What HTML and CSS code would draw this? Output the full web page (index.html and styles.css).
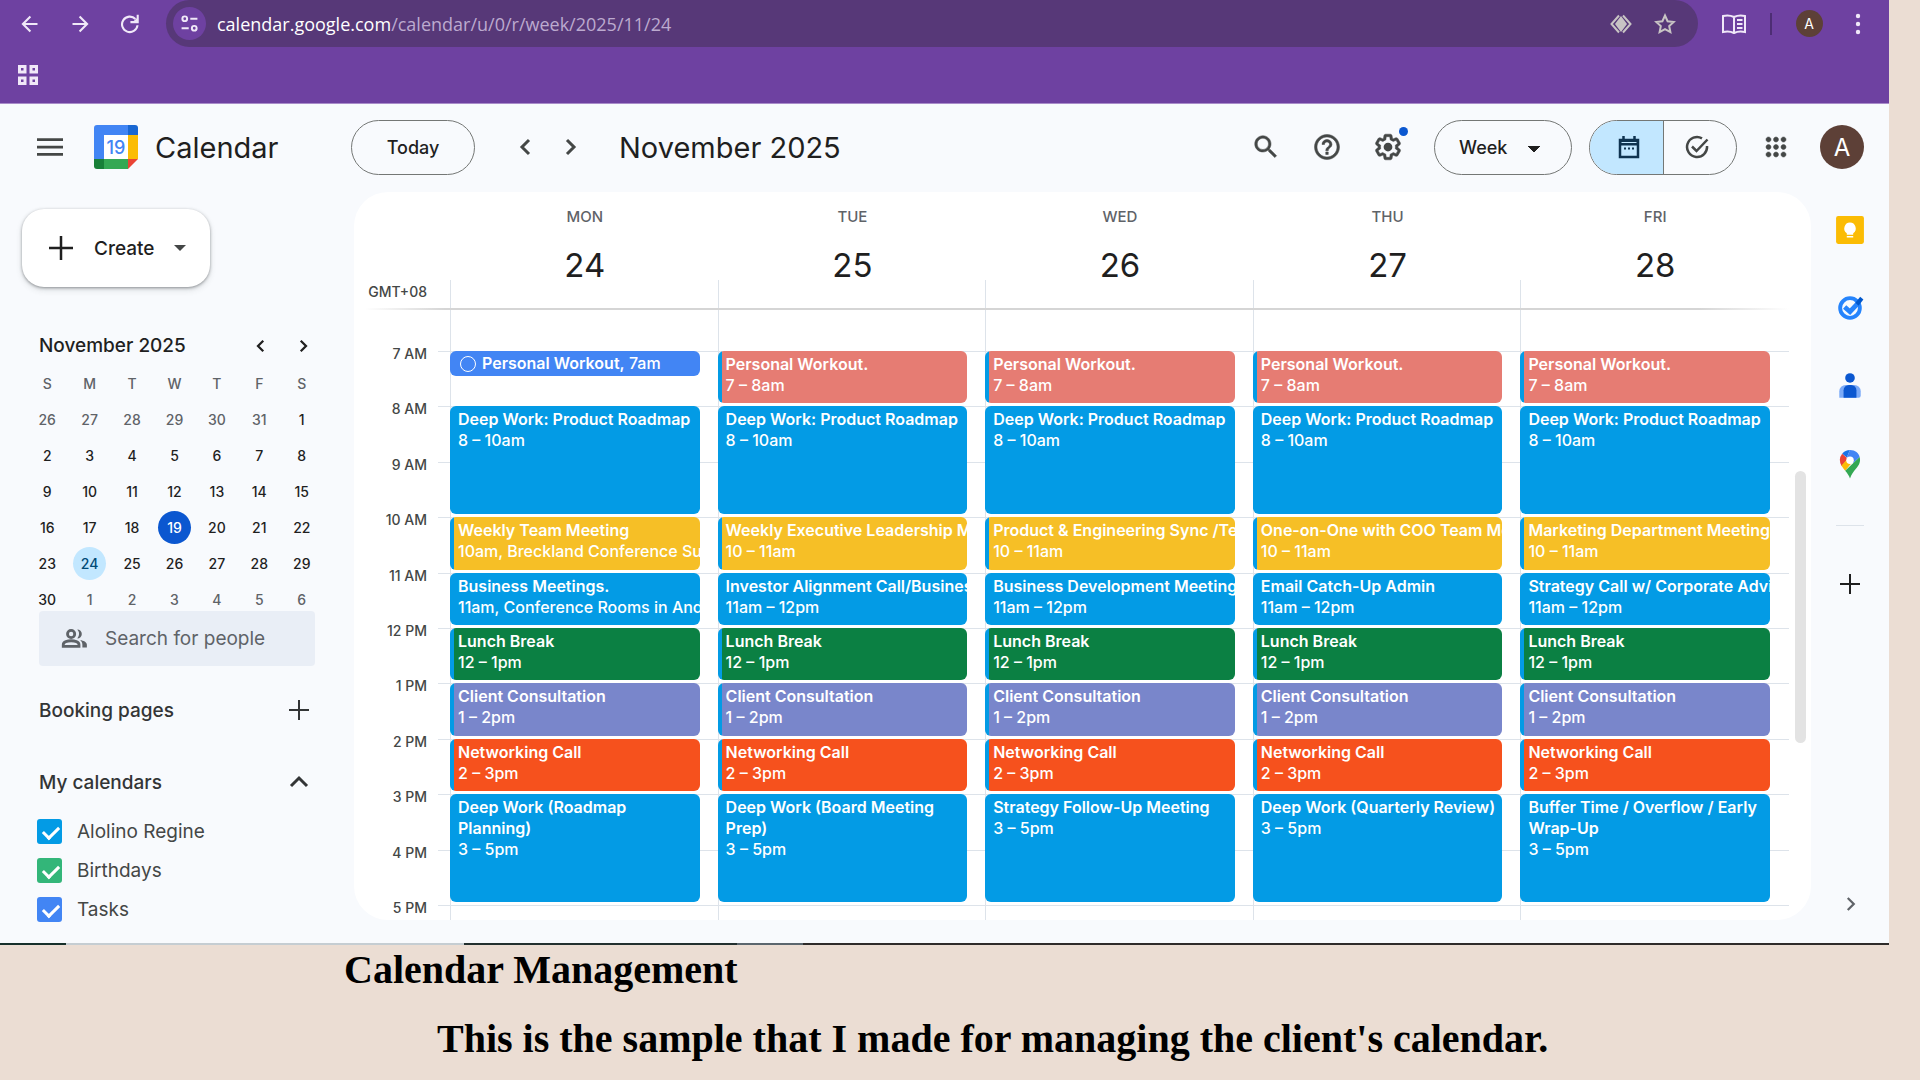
FILE: index.html
```html
<!DOCTYPE html>
<html lang="en">
<head>
    <meta charset="UTF-8">
    <meta name="viewport" content="width=device-width, initial-scale=1.0">
    <title>Calendar Management</title>
    <link rel="stylesheet" href="styles.css">
</head>
<body>
    <div class="window">
        <div class="browser">
            <div class="toolbar">
                <div class="nav-buttons">
                    <button class="icon-button" aria-label="Back"><svg class="icon" viewBox="0 0 24 24"><path class="line bold" d="M21 12H4M12.500 3L3.500 12l9 9"/></svg></button>
                    <button class="icon-button" aria-label="Forward"><svg class="icon" viewBox="0 0 24 24"><path class="line bold" d="M3 12h17M11.500 3l9 9-9 9"/></svg></button>
                    <button class="icon-button" aria-label="Reload"><svg class="icon" viewBox="0 0 24 24"><path class="line bold" d="M18.500 6A9.300 9.300 0 1 0 21 13.500"/><path d="M22.500 1v10h-10V8.500h4L20 5V1z" fill="currentColor"/></svg></button>
                </div>
                <div class="address">
                    <span class="site-info"><svg class="icon" viewBox="0 0 24 24"><g class="line bold"><circle cx="6" cy="6" r="3"/><path d="M13 6h9M2 18h9"/><circle cx="18" cy="18" r="3"/></g></svg></span>
                    <span class="url">calendar.google.com<span class="path">/calendar/u/0/r/week/2025/11/24</span></span>
                    <span class="address-icons">
                        <svg class="icon" viewBox="0 0 24 24"><path class="line" d="M10 3.500L2.500 12l7.500 8.500M14 3.500l7.500 8.500-7.500 8.500"/><path d="M12 4l6 8-6 8-6-8z" fill="currentColor"/></svg>
                        <svg class="icon" viewBox="0 0 24 24"><path class="line" d="M12 3.500l2.600 5.700 6.100.700-4.500 4.200 1.200 6.100-5.400-3-5.400 3 1.200-6.100-4.500-4.200 6.100-.7z"/></svg>
                    </span>
                </div>
                <div class="browser-menu">
                    <svg class="icon reader" viewBox="0 0 26 24"><path class="line" d="M13 5C10 3.500 6 3 2 4v16c4-1 8-.5 11 1 3-1.500 7-2 11-1V4C20 3 16 3.500 13 5zM13 5v16M16 8h5.500M16 12h5.500M16 16h5.500"/></svg>
                    <span class="bar"></span>
                    <span class="avatar small">A</span>
                    <button class="icon-button" aria-label="Browser menu"><svg class="icon" viewBox="0 0 24 24" fill="currentColor"><circle cx="12" cy="4" r="2.200"/><circle cx="12" cy="12" r="2.200"/><circle cx="12" cy="20" r="2.200"/></svg></button>
                </div>
            </div>
            <div class="bookmarks">
                <button class="icon-button" aria-label="Apps"><svg class="icon" viewBox="0 0 24 24"><path class="line thick" d="M3.500 3.500h5.500v5.500H3.500zM15 3.500h5.500v5.500H15zM3.500 15h5.500v5.500H3.500zM15 15h5.500v5.500H15z"/></svg></button>
            </div>
        </div>

        <div class="app">
            <header class="header">
                <div class="brand">
                    <button class="icon-button" aria-label="Main menu"><svg class="icon menu" viewBox="0 0 24 24"><path d="M0 20h24v-2.500H0zM0 13.300h24v-2.500H0zM0 4v2.500h24V4z" fill="currentColor"/></svg></button>
                    <svg class="logo" viewBox="0 0 44 44">
                        <path d="M3 0h31v10H10v24H0V3a3 3 0 0 1 3-3z" fill="#4285f4"/>
                        <path d="M34 0h7a3 3 0 0 1 3 3v7H34z" fill="#1967d2"/>
                        <path d="M34 10h10v24H34z" fill="#fbbc04"/>
                        <path d="M10 34h24v10H10z" fill="#34a853"/>
                        <path d="M0 34h10v10H3a3 3 0 0 1-3-3z" fill="#188038"/>
                        <path d="M34 34h10L34 44z" fill="#ea4335"/>
                        <path d="M10 10h24v24H10z" fill="#fff"/>
                        <text x="22" y="29" class="logo-day">19</text>
                    </svg>
                    <span class="brand-name">Calendar</span>
                </div>
                <div class="period">
                    <button class="pill today">Today</button>
                    <button class="icon-button" aria-label="Previous week"><svg class="icon" viewBox="0 0 24 24"><path class="line thick" d="M15 5l-7 7 7 7"/></svg></button>
                    <button class="icon-button" aria-label="Next week"><svg class="icon" viewBox="0 0 24 24"><path class="line thick" d="M9 5l7 7-7 7"/></svg></button>
                    <h1 class="period-name">November 2025</h1>
                </div>
                <div class="tools">
                    <button class="icon-button" aria-label="Search"><svg class="icon large heavy" viewBox="0 0 24 24"><path fill="currentColor" d="M15.500 14h-.79l-.28-.27C15.410 12.590 16 11.110 16 9.500 16 5.910 13.090 3 9.500 3S3 5.910 3 9.500 5.910 16 9.500 16c1.610 0 3.090-.59 4.230-1.570l.27.28v.79l5 4.990L20.490 19l-4.990-5zm-6 0C7.010 14 5 11.990 5 9.500S7.010 5 9.500 5 14 7.010 14 9.500 11.990 14 9.500 14z"/></svg></button>
                    <button class="icon-button" aria-label="Help"><svg class="icon large heavy" viewBox="0 0 24 24"><path fill="currentColor" d="M11 18h2v-2h-2v2zm1-16C6.480 2 2 6.480 2 12s4.480 10 10 10 10-4.480 10-10S17.520 2 12 2zm0 18c-4.410 0-8-3.590-8-8s3.590-8 8-8 8 3.590 8 8-3.590 8-8 8zm0-14c-2.210 0-4 1.790-4 4h2c0-1.100.9-2 2-2s2 .9 2 2c0 2-3 1.750-3 5h2c0-2.250 3-2.500 3-5 0-2.210-1.790-4-4-4z"/></svg></button>
                    <button class="icon-button settings" aria-label="Settings"><svg class="icon large heavy" viewBox="0 0 24 24" fill="currentColor"><path d="M13.850 22.250h-3.700c-.74 0-1.360-.54-1.450-1.270l-.27-1.890c-.27-.14-.53-.29-.79-.46l-1.800.72c-.7.26-1.470-.03-1.810-.65L2.200 15.530c-.35-.66-.2-1.440.36-1.880l1.530-1.190c-.01-.15-.02-.3-.02-.46 0-.15.01-.31.02-.46l-1.520-1.190c-.59-.45-.74-1.260-.37-1.880l1.850-3.190c.34-.62 1.110-.9 1.790-.63l1.810.73c.26-.17.52-.32.78-.46l.27-1.910c.09-.7.71-1.250 1.440-1.250h3.700c.74 0 1.360.54 1.450 1.270l.27 1.890c.27.14.53.29.79.46l1.800-.72c.71-.26 1.480.03 1.820.65l1.840 3.180c.36.66.2 1.440-.36 1.880l-1.520 1.190c.01.15.02.3.02.46s-.01.31-.02.46l1.520 1.190c.56.45.72 1.230.37 1.860l-1.860 3.220c-.34.62-1.110.9-1.800.63l-1.800-.72c-.26.17-.52.32-.78.46l-.27 1.910c-.1.68-.72 1.220-1.460 1.220zm-3.230-2h2.760l.37-2.550.53-.22c.44-.18.88-.44 1.340-.78l.45-.34 2.380.96 1.380-2.400-2.030-1.580.07-.56c.03-.26.06-.51.06-.78s-.03-.53-.06-.78l-.07-.56 2.030-1.580-1.390-2.400-2.390.96-.45-.35c-.42-.32-.87-.58-1.330-.77l-.52-.22-.37-2.550h-2.760l-.37 2.550-.53.21c-.44.19-.88.44-1.340.79l-.45.33-2.380-.95-1.390 2.390 2.030 1.580-.07.56a7 7 0 0 0-.06.79c0 .26.02.53.06.78l.07.56-2.030 1.580 1.380 2.400 2.390-.96.45.35c.43.33.86.58 1.330.77l.53.22z"/><circle cx="12" cy="12" r="3.500"/></svg><span class="dot"></span></button>
                    <select class="pill view" aria-label="View">
                        <option>Week</option>
                    </select>
                    <div class="toggle">
                        <button class="toggle-button active" aria-label="Calendar"><svg class="icon" viewBox="0 0 24 24"><path class="line bold" d="M3 5h18v17H3zM6.500 1v4M17.500 1v4"/><path d="M2 4h20v6.500H2z" fill="currentColor"/><path d="M4.500 7.500h15" stroke="#c2e7ff"/><path d="M7 12.500h2v2H7zM11 12.500h2v2h-2zM15 12.500h2v2h-2z" fill="currentColor"/></svg></button>
                        <button class="toggle-button" aria-label="Tasks"><svg class="icon" viewBox="0 0 24 24"><path class="line bold" d="M17 3.300A10 10 0 1 0 22 11M7 11.500l4.500 4.500L22.500 4.500"/></svg></button>
                    </div>
                    <button class="icon-button apps" aria-label="Google apps"><svg class="icon large heavy" viewBox="0 0 24 24"><path fill="currentColor" d="M6 8c1.100 0 2-.9 2-2s-.9-2-2-2-2 .9-2 2 .9 2 2 2zm6 12c1.100 0 2-.9 2-2s-.9-2-2-2-2 .9-2 2 .9 2 2 2zm-6 0c1.100 0 2-.9 2-2s-.9-2-2-2-2 .9-2 2 .9 2 2 2zm0-6c1.100 0 2-.9 2-2s-.9-2-2-2-2 .9-2 2 .9 2 2 2zm6 0c1.100 0 2-.9 2-2s-.9-2-2-2-2 .9-2 2 .9 2 2 2zm4-8c0 1.100.9 2 2 2s2-.9 2-2-.9-2-2-2-2 .9-2 2zm-4 2c1.100 0 2-.9 2-2s-.9-2-2-2-2 .9-2 2 .9 2 2 2zm6 6c1.100 0 2-.9 2-2s-.9-2-2-2-2 .9-2 2 .9 2 2 2zm0 6c1.100 0 2-.9 2-2s-.9-2-2-2-2 .9-2 2 .9 2 2 2z"/></svg></button>
                    <span class="avatar">A</span>
                </div>
            </header>

            <div class="main">
                <aside class="sidebar">
                    <button class="create">
                        <svg class="icon" viewBox="0 0 24 24"><path class="line bold" d="M12 0v24M0 12h24"/></svg>
                        <span>Create</span>
                        <span class="caret"></span>
                    </button>

                    <div class="mini-head">
                        <span class="mini-title">November 2025</span>
                        <button class="icon-button" aria-label="Previous month"><svg class="icon small-icon" viewBox="0 0 24 24"><path class="line thick" d="M15 5l-7 7 7 7"/></svg></button>
                        <button class="icon-button" aria-label="Next month"><svg class="icon small-icon" viewBox="0 0 24 24"><path class="line thick" d="M9 5l7 7-7 7"/></svg></button>
                    </div>
                    <table class="mini">
                        <thead>
                            <tr><th>S</th><th>M</th><th>T</th><th>W</th><th>T</th><th>F</th><th>S</th></tr>
                        </thead>
                        <tbody>
                            <tr><td class="other">26</td><td class="other">27</td><td class="other">28</td><td class="other">29</td><td class="other">30</td><td class="other">31</td><td>1</td></tr>
                            <tr><td>2</td><td>3</td><td>4</td><td>5</td><td>6</td><td>7</td><td>8</td></tr>
                            <tr><td>9</td><td>10</td><td>11</td><td>12</td><td>13</td><td>14</td><td>15</td></tr>
                            <tr><td>16</td><td>17</td><td>18</td><td><span class="now">19</span></td><td>20</td><td>21</td><td>22</td></tr>
                            <tr><td>23</td><td><span class="picked">24</span></td><td>25</td><td>26</td><td>27</td><td>28</td><td>29</td></tr>
                            <tr><td>30</td><td class="other">1</td><td class="other">2</td><td class="other">3</td><td class="other">4</td><td class="other">5</td><td class="other">6</td></tr>
                        </tbody>
                    </table>

                    <label class="people">
                        <svg class="icon people-icon" viewBox="0 0 24 24"><g class="line bold"><circle cx="9" cy="8" r="3.200"/><path d="M2 19v-1.500c0-2.500 4-3.500 7-3.500s7 1 7 3.500V19z"/></g><path fill="currentColor" d="M14.500 12a4 4 0 0 0 0-8 6 6 0 0 1 0 8zM17 13.300c3 .6 6 1.800 6 4.200V20h-4v-2.500c0-1.800-.8-3.100-2-4.200z"/></svg>
                        <input type="text" placeholder="Search for people" aria-label="Search for people">
                    </label>

                    <div class="section">
                        <h2>Booking pages</h2>
                        <button class="icon-button" aria-label="Add booking page"><svg class="icon" viewBox="0 0 24 24"><path class="line" d="M12 2v20M2 12h20"/></svg></button>
                    </div>
                    <div class="section">
                        <h2>My calendars</h2>
                        <button class="icon-button" aria-label="Collapse"><svg class="icon" viewBox="0 0 24 24"><path class="line thick" d="M4 16l8-8 8 8"/></svg></button>
                    </div>
                    <div class="calendars">
                        <label><input type="checkbox" class="check blue" checked>Alolino Regine</label>
                        <label><input type="checkbox" class="check green" checked>Birthdays</label>
                        <label><input type="checkbox" class="check indigo" checked>Tasks</label>
                    </div>
                </aside>

                <section class="week">
                    <div class="days">
                        <div></div>
                        <div class="day-head"><span>MON</span><strong>24</strong></div>
                        <div class="day-head"><span>TUE</span><strong>25</strong></div>
                        <div class="day-head"><span>WED</span><strong>26</strong></div>
                        <div class="day-head"><span>THU</span><strong>27</strong></div>
                        <div class="day-head"><span>FRI</span><strong>28</strong></div>
                    </div>
                    <div class="all-day">
                        <div class="zone">GMT+08</div>
                        <div class="cell"></div><div class="cell"></div><div class="cell"></div><div class="cell"></div><div class="cell"></div>
                    </div>
                    <div class="rule"></div>
                    <div class="times">
                        <div class="lines"><i></i><i></i><i></i><i></i><i></i><i></i><i></i><i></i><i></i><i></i><i></i><i></i></div>
                        <div class="hours"><span></span><span>7 AM</span><span>8 AM</span><span>9 AM</span><span>10 AM</span><span>11 AM</span><span>12 PM</span><span>1 PM</span><span>2 PM</span><span>3 PM</span><span>4 PM</span><span>5 PM</span></div>
                        <div class="day">
                            <div class="event at7 task"><span class="ring"></span><p><b>Personal Workout,</b> 7am</p></div>
                            <div class="event at8 long"><b>Deep Work: Product Roadmap</b><p>8 – 10am</p></div>
                            <div class="event at10 yellow"><b>Weekly Team Meeting</b><p>10am, Breckland Conference Suite</p></div>
                            <div class="event at11"><b>Business Meetings.</b><p>11am, Conference Rooms in Andover</p></div>
                            <div class="event at12 green"><b>Lunch Break</b><p>12 – 1pm</p></div>
                            <div class="event at13 purple"><b>Client Consultation</b><p>1 – 2pm</p></div>
                            <div class="event at14 orange"><b>Networking Call</b><p>2 – 3pm</p></div>
                            <div class="event at15 long"><b>Deep Work (Roadmap Planning)</b><p>3 – 5pm</p></div>
                        </div>
                        <div class="day">
                            <div class="event at7 pink"><b>Personal Workout.</b><p>7 – 8am</p></div>
                            <div class="event at8 long"><b>Deep Work: Product Roadmap</b><p>8 – 10am</p></div>
                            <div class="event at10 yellow"><b>Weekly Executive Leadership Meeting</b><p>10 – 11am</p></div>
                            <div class="event at11"><b>Investor Alignment Call/Business</b><p>11am – 12pm</p></div>
                            <div class="event at12 green"><b>Lunch Break</b><p>12 – 1pm</p></div>
                            <div class="event at13 purple"><b>Client Consultation</b><p>1 – 2pm</p></div>
                            <div class="event at14 orange"><b>Networking Call</b><p>2 – 3pm</p></div>
                            <div class="event at15 long"><b>Deep Work (Board Meeting Prep)</b><p>3 – 5pm</p></div>
                        </div>
                        <div class="day">
                            <div class="event at7 pink"><b>Personal Workout.</b><p>7 – 8am</p></div>
                            <div class="event at8 long"><b>Deep Work: Product Roadmap</b><p>8 – 10am</p></div>
                            <div class="event at10 yellow"><b>Product &amp; Engineering Sync /Team</b><p>10 – 11am</p></div>
                            <div class="event at11"><b>Business Development Meeting</b><p>11am – 12pm</p></div>
                            <div class="event at12 green"><b>Lunch Break</b><p>12 – 1pm</p></div>
                            <div class="event at13 purple"><b>Client Consultation</b><p>1 – 2pm</p></div>
                            <div class="event at14 orange"><b>Networking Call</b><p>2 – 3pm</p></div>
                            <div class="event at15 long"><b>Strategy Follow-Up Meeting</b><p>3 – 5pm</p></div>
                        </div>
                        <div class="day">
                            <div class="event at7 pink"><b>Personal Workout.</b><p>7 – 8am</p></div>
                            <div class="event at8 long"><b>Deep Work: Product Roadmap</b><p>8 – 10am</p></div>
                            <div class="event at10 yellow"><b>One-on-One with COO Team Meeting</b><p>10 – 11am</p></div>
                            <div class="event at11"><b>Email Catch-Up Admin</b><p>11am – 12pm</p></div>
                            <div class="event at12 green"><b>Lunch Break</b><p>12 – 1pm</p></div>
                            <div class="event at13 purple"><b>Client Consultation</b><p>1 – 2pm</p></div>
                            <div class="event at14 orange"><b>Networking Call</b><p>2 – 3pm</p></div>
                            <div class="event at15 long"><b>Deep Work (Quarterly Review)</b><p>3 – 5pm</p></div>
                        </div>
                        <div class="day">
                            <div class="event at7 pink"><b>Personal Workout.</b><p>7 – 8am</p></div>
                            <div class="event at8 long"><b>Deep Work: Product Roadmap</b><p>8 – 10am</p></div>
                            <div class="event at10 yellow"><b>Marketing Department Meeting</b><p>10 – 11am</p></div>
                            <div class="event at11"><b>Strategy Call w/ Corporate Advisors</b><p>11am – 12pm</p></div>
                            <div class="event at12 green"><b>Lunch Break</b><p>12 – 1pm</p></div>
                            <div class="event at13 purple"><b>Client Consultation</b><p>1 – 2pm</p></div>
                            <div class="event at14 orange"><b>Networking Call</b><p>2 – 3pm</p></div>
                            <div class="event at15 long"><b>Buffer Time / Overflow / Early Wrap-Up</b><p>3 – 5pm</p></div>
                        </div>
                        <div class="scroll-thumb"></div>
                    </div>
                </section>

                <nav class="side-panel">
                    <button class="icon-button" aria-label="Keep"><svg class="icon large" viewBox="0 0 28 28"><rect x="1" y="1" width="26" height="26" rx="2" fill="#fbbc04"/><path d="M14 7a5.500 5.500 0 0 0-3 10v1.500h6V17a5.500 5.500 0 0 0-3-10zM11 19.500h6V21h-6z" fill="#fff"/></svg></button>
                    <button class="icon-button" aria-label="Tasks"><svg class="icon large" viewBox="0 0 28 28"><circle cx="14" cy="14" r="9.200" fill="none" stroke="#2684fc" stroke-width="3.600"/><path d="M9 13l5 4.500L22 9" fill="none" stroke="#2684fc" stroke-width="4.500"/><path d="M19 9l4.500-5.500 3 2.500-4.500 6z" fill="#0057cc"/></svg></button>
                    <button class="icon-button" aria-label="Contacts"><svg class="icon large" viewBox="0 0 28 28"><path d="M4 25v-6a6 6 0 0 1 6-6h8a6 6 0 0 1 6 6v4a2 2 0 0 1-2 2z" fill="#7baaf7"/><path d="M8 25v-7a5 5 0 0 1 5-5h2a5 5 0 0 1 5 5v7z" fill="#0b57d0"/><circle cx="14" cy="6.500" r="4.500" fill="#0b57d0"/></svg></button>
                    <button class="icon-button" aria-label="Maps"><svg class="icon large" viewBox="0 0 28 28"><path d="M14 1a9.500 9.500 0 0 0-7.300 3.400L11 8z" fill="#1a73e8"/><path d="M6.700 4.400A9.500 9.500 0 0 0 6.300 16L12 9z" fill="#ea4335"/><path d="M14 1c5 0 8 3 9 6.500L17 13l-6-5z" fill="#4285f4"/><path d="M6 15.500c1 1.800 2.300 3.200 3.500 4.700L18 10l-7 0z" fill="#fbbc04"/><path d="M23 7.500c1.200 4.500-.500 7.500-3.500 11-2.500 3-4 5-5.500 9-1-3-2.500-5-4.500-7.300z" fill="#34a853"/><circle cx="14" cy="10.500" r="3.500" fill="#fff"/></svg></button>
                    <hr>
                    <button class="icon-button add" aria-label="Get add-ons"><svg class="icon" viewBox="0 0 24 24"><path class="line" d="M12 2v20M2 12h20"/></svg></button>
                    <button class="icon-button collapse" aria-label="Hide side panel"><svg class="icon small-icon" viewBox="0 0 24 24"><path class="line thick" d="M9 4l8 8-8 8"/></svg></button>
                </nav>
            </div>
        </div>
        <div class="taskbar-edge"></div>
    </div>

    <div class="caption">
        <h2>Calendar Management</h2>
        <p>This is the sample that I made for managing the client's calendar.</p>
    </div>
</body>
</html>
```
FILE: styles.css
```css
* {
    box-sizing: border-box;
}
body {
    margin: 0;
    background-color: #ebddd3;
    font-family: Inter, "Liberation Sans", sans-serif;
    color: #1f1f1f;
}
h1, h2, p {
    margin: 0;
    font-weight: 400;
}
button {
    font: inherit;
    color: inherit;
    cursor: pointer;
}
.window {
    margin-right: 31px;
}
.icon-button {
    display: flex;
    align-items: center;
    justify-content: center;
    padding: 0;
    border: none;
    background: none;
}
.icon {
    display: block;
    width: 24px;
    height: 24px;
}
.icon.large {
    width: 30px;
    height: 30px;
}
.icon.small-icon {
    width: 18px;
    height: 18px;
}
.line {
    fill: none;
    stroke: currentColor;
    stroke-width: 2;
}
.bold {
    stroke-width: 2.5;
}
.thick {
    stroke-width: 3;
}
.heavy path {
    stroke: currentColor;
    stroke-width: 0.4;
}
.avatar {
    display: flex;
    align-items: center;
    justify-content: center;
    width: 44px;
    height: 44px;
    border-radius: 50%;
    background-color: #5d4037;
    color: #fff;
    font-size: 24px;
}
.avatar.small {
    width: 27px;
    height: 27px;
    font-size: 14px;
}

/* browser bar */
.browser {
    height: 104px;
    background-color: #6e41a1;
    border-bottom: 1px solid #a98cca;
    color: #f0e8f8;
}
.toolbar {
    display: flex;
    height: 47px;
}
.nav-buttons {
    display: flex;
    align-items: center;
    gap: 30px;
    width: 166px;
    padding-left: 20px;
}
.nav-buttons .icon {
    width: 20px;
    height: 20px;
}
.address {
    display: flex;
    flex: 1;
    align-items: center;
    padding: 0 21px 0 7px;
    border-radius: 24px;
    background-color: #573878;
}
.site-info {
    display: flex;
    align-items: center;
    justify-content: center;
    width: 33px;
    height: 33px;
    border-radius: 50%;
    background-color: #6e41a1;
}
.site-info .icon {
    width: 19px;
    height: 19px;
}
.url {
    flex: 1;
    margin-left: 11px;
    font-family: "Open Sans", sans-serif;
    font-size: 18px;
    line-height: 24px;
    color: #fff;
}
.path {
    color: #bcaacf;
}
.address-icons {
    display: flex;
    gap: 20px;
    color: #c8c4c4;
}
.browser-menu {
    display: flex;
    align-items: center;
    justify-content: space-between;
    width: 191px;
    padding: 0 19px 0 23px;
}
.reader {
    width: 26px;
}
.bar {
    width: 2px;
    height: 22px;
    background-color: #4d2d74;
}
.bookmarks {
    display: flex;
    align-items: center;
    height: 56px;
    padding-left: 16px;
}

/* calendar header */
.app {
    background-color: #f8fafd;
}
.header {
    display: flex;
    align-items: center;
    height: 88px;
    padding: 0 25px 2px 37px;
    color: #444746;
}
.brand {
    display: flex;
    align-items: center;
    width: 314px;
}
.icon.menu {
    width: 26px;
    height: 26px;
}
.logo {
    width: 44px;
    height: 44px;
    margin: 0 17px 0 31px;
}
.logo-day {
    font-size: 18px;
    font-weight: 500;
    text-anchor: middle;
    fill: #4285f4;
}
.brand-name {
    font-size: 29px;
    color: #1f1f1f;
}
.period {
    display: flex;
    flex: 1;
    align-items: center;
}
.pill {
    height: 55px;
    border: 1px solid #747775;
    border-radius: 28px;
    background-color: transparent;
    color: #1f1f1f;
    font-size: 18px;
    font-weight: 500;
}
.today {
    width: 124px;
    margin-right: 39px;
}
.period .icon-button {
    margin-right: 20px;
}
.period-name {
    margin-left: 17px;
    font-size: 29px;
    color: #1f1f1f;
}
.tools {
    display: flex;
    align-items: center;
}
.tools .icon-button {
    margin-right: 31px;
}
.tools .apps {
    margin-right: 29px;
}
.tools .settings {
    position: relative;
}
.dot {
    position: absolute;
    top: -5px;
    right: -5px;
    width: 9px;
    height: 9px;
    border-radius: 50%;
    background-color: #0b57d0;
}
.view {
    width: 138px;
    margin-right: 17px;
    padding: 0 24px;
    appearance: none;
    font-family: inherit;
    background-image: linear-gradient(to bottom right, #1f1f1f 50%, transparent 50%), linear-gradient(to bottom left, #1f1f1f 50%, transparent 50%);
    background-size: 6px 6px;
    background-position: 99px 25px, 93px 25px;
    background-repeat: no-repeat;
}
.toggle {
    display: flex;
    width: 148px;
    height: 55px;
    margin-right: 24px;
    border: 1px solid #747775;
    border-radius: 28px;
    overflow: hidden;
}
.toggle-button {
    display: flex;
    flex: 1;
    align-items: center;
    justify-content: center;
    padding: 0 6px 0 0;
    border: none;
    background: none;
}
.toggle-button.active {
    padding: 0 0 0 6px;
    border-right: 1px solid #747775;
    background-color: #c2e7ff;
    color: #0f3350;
}

/* sidebar */
.main {
    display: flex;
}
.sidebar {
    width: 354px;
    padding: 17px 0 0 39px;
}
.create {
    display: flex;
    align-items: center;
    gap: 21px;
    height: 78px;
    margin-left: -17px;
    padding: 0 24px 0 27px;
    border: none;
    border-radius: 22px;
    background-color: #fff;
    box-shadow: 0 1px 3px rgba(60, 64, 67, 0.5), 0 3px 6px rgba(60, 64, 67, 0.15);
    font-size: 19px;
    font-weight: 500;
}
.caret {
    border: 6px solid transparent;
    border-top-color: #444746;
    border-bottom: none;
}
.create .caret {
    margin-left: -2px;
}
.mini-head {
    display: flex;
    align-items: center;
    gap: 24px;
    margin: 46px 42px 7px 0;
    line-height: 26px;
}
.mini-title {
    flex: 1;
    font-size: 19px;
    font-weight: 500;
}
.mini {
    width: 297px;
    margin-left: -13px;
    border-collapse: collapse;
    table-layout: fixed;
    font-size: 14px;
    font-weight: 500;
    text-align: center;
}
.mini th, .mini td {
    height: 36px;
    padding: 0;
}
.mini th, .mini .other {
    color: #5f6368;
    font-weight: 500;
}
.mini thead th {
    height: 35px;
}
.mini span {
    display: block;
    width: 33px;
    margin: 0 auto;
    border-radius: 50%;
    line-height: 33px;
}
.now {
    background-color: #0b57d0;
    color: #fff;
}
.picked {
    background-color: #c2e7ff;
    color: #004a77;
}
.people {
    display: flex;
    align-items: center;
    gap: 17px;
    width: 276px;
    height: 55px;
    margin-top: -6px;
    padding-left: 22px;
    border-radius: 4px;
    background-color: #e9eef6;
    color: #5f6368;
    position: relative;
}
.people-icon {
    width: 27px;
    height: 27px;
}
.people input {
    width: 200px;
    padding: 0;
    border: none;
    outline: none;
    background: none;
    font: inherit;
    font-size: 19px;
}
.people input::placeholder {
    color: #5f6368;
}
.section {
    display: flex;
    align-items: center;
    justify-content: space-between;
    width: 272px;
    height: 72px;
    color: #333536;
}
.section h2 {
    font-size: 19px;
    font-weight: 500;
}
.people + .section {
    margin-top: 8px;
}
.calendars {
    display: flex;
    flex-direction: column;
    gap: 14px;
    margin: 1px 0 0 -2px;
}
.calendars label {
    display: flex;
    align-items: center;
    gap: 15px;
    height: 25px;
    font-size: 19px;
    color: #444746;
}
.check {
    width: 25px;
    height: 25px;
    margin: 0;
    appearance: none;
    border-radius: 3px;
}
.check::after {
    content: "";
    display: block;
    width: 7px;
    height: 13px;
    margin: 4px 0 0 9px;
    border: solid #fff;
    border-width: 0 3px 3px 0;
    transform: rotate(45deg);
}
.check.blue {
    background-color: #039be5;
}
.check.green {
    background-color: #33b679;
}
.check.indigo {
    background-color: #4285f4;
}

/* week grid */
.week {
    flex: 1;
    margin-bottom: 23px;
    border-radius: 34px;
    background-color: #fff;
    overflow: hidden;
}
.days, .all-day, .times {
    display: grid;
    grid-template-columns: 96px repeat(5, minmax(0, 1fr));
    padding-right: 23px;
}
.day-head {
    display: flex;
    flex-direction: column;
    align-items: center;
    height: 88px;
    padding: 16px 0 0 2px;
    font-size: 15px;
    font-weight: 500;
    line-height: 18px;
    color: #5f6368;
}
.day-head strong {
    margin-top: 20px;
    font-size: 33px;
    font-weight: 400;
    line-height: 38px;
    color: #1f1f1f;
}
.zone {
    padding: 3px 23px 0 0;
    font-size: 14px;
    font-weight: 500;
    line-height: 18px;
    text-align: right;
    color: #444746;
}
.cell {
    height: 28px;
    border-left: 1px solid #dde3ea;
}
.rule {
    height: 2px;
    margin: 0 22px 0 11px;
    background: linear-gradient(to right, transparent, #d5d5d5 80px, #d5d5d5 calc(100% - 90px), transparent);
}
.times {
    position: relative;
    height: 610px;
}
.lines, .hours, .day {
    display: grid;
    grid-template-rows: 41px repeat(10, 1fr) 15px;
}
.lines {
    position: absolute;
    top: 0;
    bottom: 0;
    left: 84px;
    right: 22px;
}
.lines i + i {
    border-top: 1px solid #dde3ea;
}
.hours {
    padding-right: 23px;
    font-size: 14px;
    font-weight: 500;
    line-height: 18px;
    text-align: right;
    color: #444746;
}
.hours span {
    margin-top: -6px;
}
.day {
    position: relative;
    padding-right: 18px;
    border-left: 1px solid #dde3ea;
}
.event {
    margin: 0 0 3px -1px;
    padding: 3px 0 0 8px;
    border-radius: 6px;
    background-color: #039be5;
    color: #fff;
    font-size: 16px;
    line-height: 21px;
    white-space: nowrap;
    overflow: hidden;
}
.event b {
    display: block;
    font-weight: 600;
}
.event p {
    font-weight: 500;
}
.long {
    white-space: normal;
}
.at7 {
    grid-row: 2;
}
.at8 {
    grid-row: 3 / span 2;
}
.at10 {
    grid-row: 5;
}
.at11 {
    grid-row: 6;
}
.at12 {
    grid-row: 7;
}
.at13 {
    grid-row: 8;
}
.at14 {
    grid-row: 9;
}
.at15 {
    grid-row: 10 / span 2;
}
.task {
    display: flex;
    align-items: center;
    align-self: start;
    gap: 6px;
    height: 25px;
    padding: 0 0 0 10px;
    background-color: #4285f4;
}
.task b {
    display: inline;
}
.ring {
    width: 16px;
    height: 16px;
    border: 1px solid #fff;
    border-radius: 50%;
}
.pink, .yellow, .event.green, .purple, .orange {
    background-image: linear-gradient(to right, #039be5 4px, transparent 4px);
}
.pink {
    background-color: #e67c73;
}
.yellow {
    background-color: #f6bf26;
}
.event.green {
    background-color: #0b8043;
}
.purple {
    background-color: #7986cb;
}
.orange {
    background-color: #f6511d;
}
.scroll-thumb {
    position: absolute;
    top: 161px;
    right: 5px;
    width: 11px;
    height: 272px;
    border-radius: 6px;
    background-color: #e3e3e3;
}

/* right panel */
.side-panel {
    display: flex;
    flex-direction: column;
    align-items: center;
    gap: 48px;
    width: 78px;
    padding: 23px 0 30px;
}
.side-panel hr {
    width: 28px;
    margin: -2px 0;
    border: none;
    border-top: 1px solid #dde3ea;
}
.collapse {
    margin-top: auto;
    color: #5f6368;
}
.taskbar-edge {
    height: 2px;
    background: linear-gradient(to right, #16302b 66px, #c5cdd2 66px, #c5cdd2 464px, #22302f 464px, #22302f 737px, #5b666e 737px, #5b666e 803px, #2e2b2a 803px);
}

/* text under the window */
.caption {
    padding-left: 344px;
    font-family: "Liberation Serif", serif;
    color: #000;
}
.caption h2, .caption p {
    font-size: 40px;
    font-weight: 700;
    line-height: 50px;
}
.caption p {
    padding: 19px 0 0 93px;
}
```
